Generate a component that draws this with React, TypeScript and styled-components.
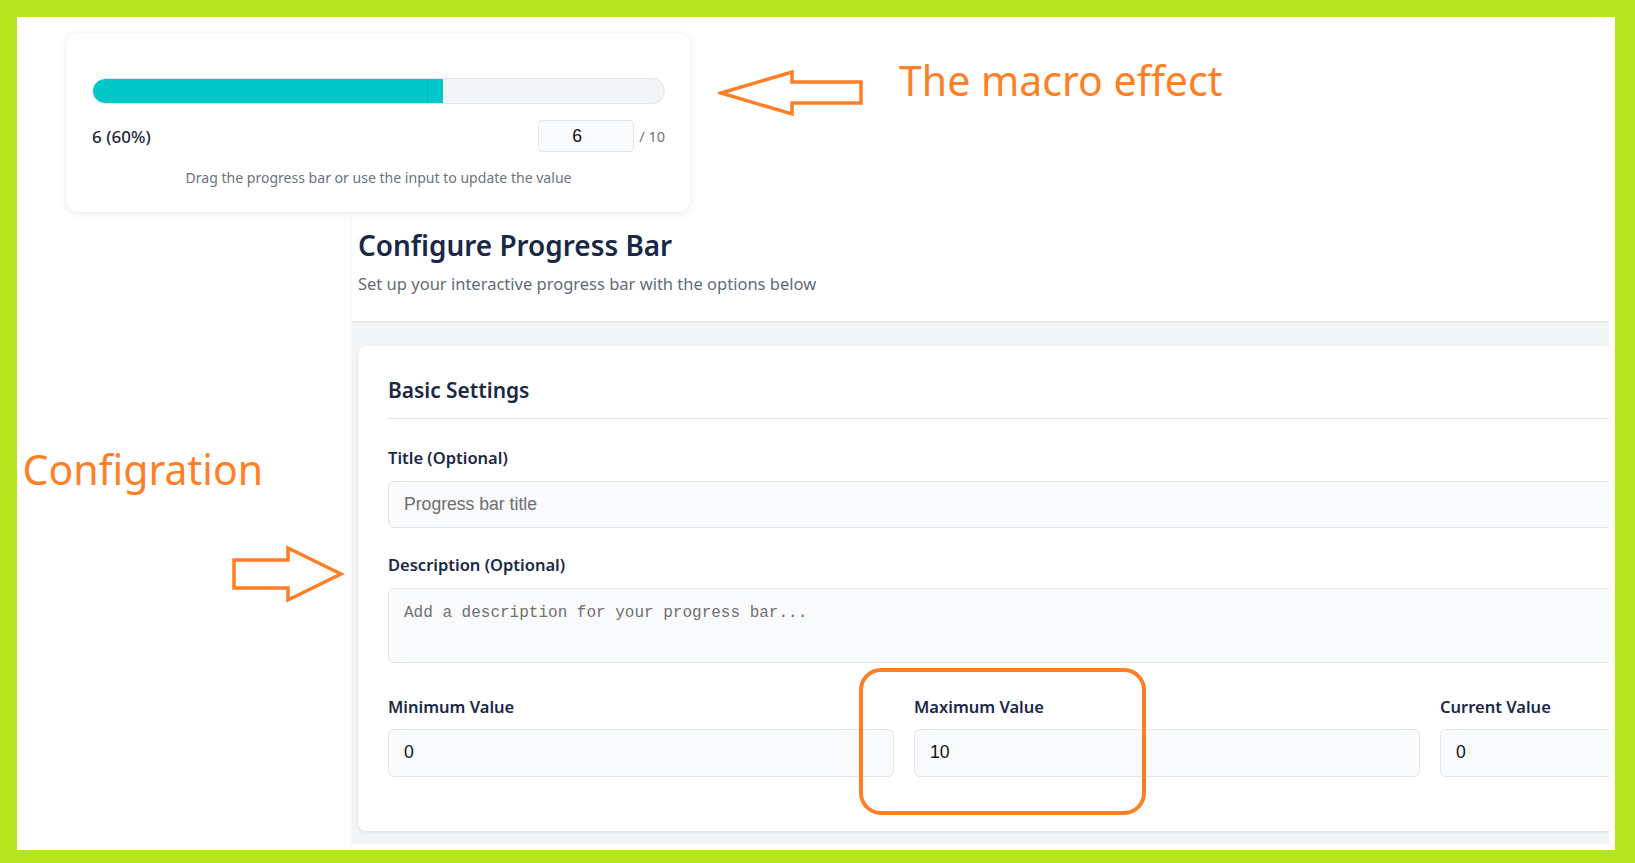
import React from "react";
import styled, { createGlobalStyle } from "styled-components";

const GlobalStyle = createGlobalStyle`
  html, body { margin: 0; padding: 0; overflow: hidden; background: #ffffff; }
  * { box-sizing: border-box; }
`;

const ORANGE = "#FF7F27";
const UI_FONT = `"Noto Sans", "Open Sans", sans-serif`;

const Frame = styled.div`
  width: 1635px;
  height: 863px;
  display: flex;
  padding: 17px 20px 13px 17px;
  background: #b5e61d;
`;

const Canvas = styled.div`
  flex: 1;
  position: relative;
  display: flex;
  flex-direction: column;
  background: #ffffff;
  overflow: hidden;
`;

const TopRow = styled.div`
  height: 196px;
  flex-shrink: 0;
  display: flex;
  align-items: flex-start;
  padding: 16px 0 0 49px;
  position: relative;
  z-index: 2;
`;

const ProgressCard = styled.div`
  width: 624px;
  height: 179px;
  flex-shrink: 0;
  background: #ffffff;
  border-radius: 12px;
  box-shadow: 0 2px 10px rgba(0, 0, 0, 0.08), 0 0 2px rgba(0, 0, 0, 0.04);
  padding: 45px 25px 0 26px;
  display: flex;
  flex-direction: column;
  font-family: ${UI_FONT};
`;

const Track = styled.div`
  height: 26px;
  display: flex;
  background: #f3f4f6;
  border: 1px solid #e3e5e9;
  border-radius: 13px;
  overflow: hidden;
`;

const Fill = styled.div`
  height: 100%;
  background: #00c8c8;
  border-right: 1px solid rgba(0, 90, 90, 0.18);
  border-radius: 12px 0 0 12px;
`;

const Handle = styled.div`
  width: 15px;
  height: 100%;
  background: #00c8c8;
`;

const ValueRow = styled.div`
  margin-top: 16px;
  height: 32px;
  display: flex;
  align-items: center;
`;

const ValueText = styled.div`
  flex: 1;
  font-size: 17px;
  font-weight: 500;
  color: #1f2937;
`;

const ValueInput = styled.input`
  width: 96px;
  height: 32px;
  border: 1px solid #e2e5ea;
  border-radius: 4px;
  background: #f9fafb;
  padding: 0 18px 0 0;
  text-align: center;
  font-family: "Liberation Sans", Arial, sans-serif;
  font-size: 17.6px;
  color: #111;
  outline: none;
`;

const MaxText = styled.span`
  margin-left: 5px;
  font-size: 14.5px;
  color: #6b7280;
`;

const Hint = styled.div`
  margin-top: 14.6px;
  text-align: center;
  font-size: 14.05px;
  line-height: 1.5;
  color: #6b7280;
`;

const AnnotationText = styled.div<{ $size: number }>`
  font-family: "Noto Sans", "Open Sans", sans-serif;
  font-size: ${(p) => p.$size}px;
  line-height: 1;
  color: ${ORANGE};
  white-space: nowrap;
`;

const TopAnnotation = styled(AnnotationText)`
  margin: 27px 0 0 33px;
`;

const ArrowSvg = styled.svg<{ $mt: number; $ml: number }>`
  display: block;
  flex-shrink: 0;
  margin-top: ${(p) => p.$mt}px;
  margin-left: ${(p) => p.$ml}px;
`;

const BottomRow = styled.div`
  flex: 1;
  display: flex;
  padding: 0 6px 6px 0;
  min-height: 0;
`;

const LeftCol = styled.div`
  width: 335px;
  flex-shrink: 0;
  display: flex;
  flex-direction: column;
  align-items: flex-start;
`;

const SideAnnotation = styled(AnnotationText)`
  margin: 236px 0 0 5.5px;
`;

const ConfigSection = styled.div`
  flex: 1;
  min-width: 0;
  display: flex;
  flex-direction: column;
  overflow: hidden;
  box-shadow: -1px 0 2px rgba(0, 0, 0, 0.04);
  font-family: ${UI_FONT};
`;

const Header = styled.div`
  height: 108px;
  flex-shrink: 0;
  padding: 16px 0 0 6px;
  background: #ffffff;
  position: relative;
  z-index: 1;
  box-shadow: 0 1px 3px rgba(0, 0, 0, 0.09);
`;

const Title = styled.h1`
  margin: 0;
  font-size: 27.9px;
  line-height: 1.2;
  font-weight: 600;
  color: #1a2847;
  white-space: nowrap;
`;

const Subtitle = styled.p`
  margin: 10px 0 0;
  font-size: 16.5px;
  line-height: 1.5;
  color: #5f6b7d;
  white-space: nowrap;
`;

const Band = styled.div`
  flex: 1;
  background: #f3f4f6;
  padding: 25px 0 13px 6px;
  display: flex;
  min-height: 0;
`;

const SettingsCard = styled.div`
  width: 1618px;
  flex-shrink: 0;
  background: #ffffff;
  border-radius: 8px;
  box-shadow: 0 1px 3px rgba(0, 0, 0, 0.1);
  padding: 30px 30px 0 30px;
`;

const SectionHeading = styled.h2`
  margin: 0 0 27.6px;
  padding-bottom: 12.4px;
  border-bottom: 1px solid #e5e7eb;
  font-size: 20.9px;
  line-height: 1.4;
  font-weight: 600;
  color: #1a2847;
`;

const Field = styled.div`
  display: flex;
  flex-direction: column;
  margin-bottom: 25.6px;
`;

const Label = styled.label`
  font-size: 16.5px;
  line-height: 1.5;
  font-weight: 600;
  color: #1a2847;
  margin-bottom: 9.6px;
  white-space: nowrap;
`;

const TextInput = styled.input<{ $h?: number }>`
  height: ${(p) => p.$h ?? 47}px;
  width: 100%;
  border: 1px solid #e2e5ea;
  border-radius: 6px;
  background: #f9fafb;
  padding: 0 15px;
  font-family: "Liberation Sans", Arial, sans-serif;
  font-size: 17.6px;
  color: #111;
  outline: none;
  &::placeholder { color: #6e6e6e; }
`;

const TextArea = styled.textarea`
  display: block;
  height: 75px;
  width: 100%;
  resize: none;
  border: 1px solid #e2e5ea;
  border-radius: 6px;
  background: #f9fafb;
  padding: 15px 15px;
  font-family: "Liberation Mono", "DejaVu Sans Mono", monospace;
  font-size: 16px;
  line-height: 1.2;
  color: #111;
  outline: none;
  &::placeholder { color: #707070; }
`;

const ValueGrid = styled.div`
  margin-top: 32px;
  display: grid;
  grid-template-columns: repeat(3, 506px);
  column-gap: 20px;
`;

const Highlight = styled.div`
  position: absolute;
  left: 842px;
  top: 651px;
  width: 287px;
  height: 147px;
  border: 4px solid ${ORANGE};
  border-radius: 22px;
  pointer-events: none;
  z-index: 5;
`;

const LeftArrow = () => (
  <ArrowSvg width="148" height="48" viewBox="0 0 148 48" $mt={36} $ml={28}>
    <polygon
      points="3,24 74,3 74,13 143,13 143,34 74,34 74,45"
      fill="none"
      stroke={ORANGE}
      strokeWidth="3.5"
      strokeLinejoin="miter"
    />
  </ArrowSvg>
);

const RightArrow = () => (
  <ArrowSvg width="116" height="58" viewBox="0 0 116 58" $mt={55} $ml={214}>
    <polygon
      points="3,15 57,15 57,3 110,29 57,55 57,43 3,43"
      fill="none"
      stroke={ORANGE}
      strokeWidth="3.5"
      strokeLinejoin="miter"
    />
  </ArrowSvg>
);

export default function App() {
  const min = 0;
  const max = 10;
  const value = 6;
  const pct = ((value - min) / (max - min)) * 100;

  return (
    <>
      <GlobalStyle />
      <Frame>
        <Canvas>
          <TopRow>
            <ProgressCard>
              <Track>
                <Fill style={{ width: `calc(${pct}% - 8px)` }} />
                <Handle />
              </Track>
              <ValueRow>
                <ValueText>
                  {value} ({pct}%)
                </ValueText>
                <ValueInput type="text" defaultValue={String(value)} />
                <MaxText>/ {max}</MaxText>
              </ValueRow>
              <Hint>Drag the progress bar or use the input to update the value</Hint>
            </ProgressCard>
            <LeftArrow />
            <TopAnnotation $size={41}>The macro effect</TopAnnotation>
          </TopRow>

          <BottomRow>
            <LeftCol>
              <SideAnnotation $size={41}>Configration</SideAnnotation>
              <RightArrow />
            </LeftCol>

            <ConfigSection>
              <Header>
                <Title>Configure Progress Bar</Title>
                <Subtitle>Set up your interactive progress bar with the options below</Subtitle>
              </Header>
              <Band>
                <SettingsCard>
                  <SectionHeading>Basic Settings</SectionHeading>
                  <Field>
                    <Label>Title (Optional)</Label>
                    <TextInput type="text" placeholder="Progress bar title" />
                  </Field>
                  <Field>
                    <Label>Description (Optional)</Label>
                    <TextArea placeholder="Add a description for your progress bar..." />
                  </Field>
                  <ValueGrid>
                    <Field>
                      <Label>Minimum Value</Label>
                      <TextInput type="text" defaultValue="0" $h={48} />
                    </Field>
                    <Field>
                      <Label>Maximum Value</Label>
                      <TextInput type="text" defaultValue="10" $h={48} />
                    </Field>
                    <Field>
                      <Label>Current Value</Label>
                      <TextInput type="text" defaultValue="0" $h={48} />
                    </Field>
                  </ValueGrid>
                </SettingsCard>
              </Band>
            </ConfigSection>
          </BottomRow>
          <Highlight />
        </Canvas>
      </Frame>
    </>
  );
}
